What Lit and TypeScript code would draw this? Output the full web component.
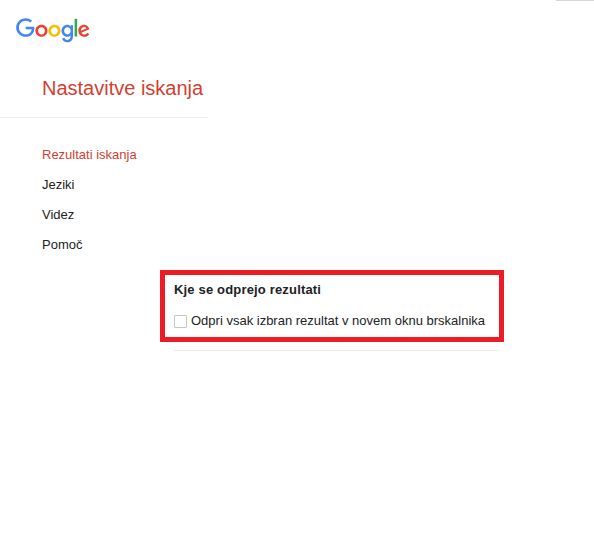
import { LitElement, html, css } from "lit";
import { customElement } from "lit/decorators.js";

@customElement("app-root")
export class AppRoot extends LitElement {
  static styles = css`
    :host { display: block; position: relative; width: 594px; height: 558px; background: #fff; overflow: hidden;
      font-family: "Liberation Sans", Arial, sans-serif; color: #222; }
    .topline { position: absolute; top: 0; right: 0; width: 38px; height: 1px; background: #d6d6d6; }
    .logo { display: block; width: 74px; height: 25px; margin: 18px 0 0 16px; }
    .title-row { width: 208px; height: 57px; margin-top: 17px; border-bottom: 1px solid #ebebeb; box-sizing: content-box; }
    h1 { margin: 0; padding-left: 42px; font-size: 20px; font-weight: 400; line-height: 57px; height: 57px; color: #d23f2f; white-space: nowrap; }
    nav { display: flex; flex-direction: column; gap: 14px; padding: 29px 0 0 42px; }
    nav a { font-size: 13px; line-height: 16px; color: #222; }
    nav a.active { color: #d23f2f; }
    .box { box-sizing: border-box; width: 344px; height: 72px; margin: 17px 0 0 160px; border: 5px solid #ed1c24; padding: 7px 9px; }
    h2 { margin: 0; font-size: 13px; font-weight: 700; line-height: 16px; letter-spacing: 0.17px; color: #222; white-space: nowrap; }
    .opt { display: flex; align-items: center; gap: 4px; margin-top: 15px; font-size: 13px; line-height: 16px; color: #222; white-space: nowrap; }
    .cb { box-sizing: border-box; width: 13px; height: 13px; border: 1px solid #c6c6c6; border-radius: 1px; background: #fff; }
    .rule { width: 324px; height: 1px; margin: 8px 0 0 174px; background: #ebebeb; }
  `;

  render() {
    return html`
      <div class="topline"></div>
      <svg class="logo" viewBox="0 0 272 92" aria-label="Google">
        <path fill="#EA4335" d="M115.75 47.18c0 12.77-9.99 22.18-22.25 22.18s-22.25-9.41-22.25-22.18C71.25 34.32 81.24 25 93.5 25s22.25 9.32 22.25 22.18zm-9.74 0c0-7.98-5.79-13.44-12.51-13.44S80.99 39.2 80.99 47.18c0 7.9 5.79 13.44 12.51 13.44s12.51-5.55 12.51-13.44z"/>
        <path fill="#FBBC05" d="M163.75 47.18c0 12.77-9.99 22.18-22.25 22.18s-22.25-9.41-22.25-22.18c0-12.85 9.99-22.18 22.25-22.18s22.25 9.32 22.25 22.18zm-9.74 0c0-7.98-5.79-13.44-12.51-13.44s-12.51 5.46-12.51 13.44c0 7.9 5.79 13.44 12.51 13.44s12.51-5.55 12.51-13.44z"/>
        <path fill="#4285F4" d="M209.75 26.34v39.82c0 16.38-9.66 23.07-21.08 23.07-10.75 0-17.22-7.19-19.66-13.07l8.48-3.53c1.51 3.61 5.21 7.87 11.17 7.87 7.31 0 11.84-4.51 11.84-13v-3.19h-.34c-2.18 2.69-6.38 5.04-11.68 5.04-11.09 0-21.25-9.66-21.25-22.09 0-12.52 10.16-22.26 21.25-22.26 5.29 0 9.49 2.35 11.68 4.96h.34v-3.61h9.25zm-8.56 20.92c0-7.81-5.21-13.52-11.84-13.52-6.72 0-12.35 5.71-12.35 13.52 0 7.73 5.63 13.36 12.35 13.36 6.63 0 11.84-5.63 11.84-13.36z"/>
        <path fill="#34A853" d="M225 3v65h-9.5V3h9.5z"/>
        <path fill="#EA4335" d="M262.02 54.48l7.56 5.04c-2.44 3.61-8.32 9.83-18.48 9.83-12.6 0-22.01-9.74-22.01-22.18 0-13.19 9.49-22.18 20.92-22.18 11.51 0 17.14 9.16 18.98 14.11l1.01 2.52-29.65 12.28c2.27 4.45 5.8 6.72 10.75 6.72 4.96 0 8.4-2.44 10.92-6.14zm-23.27-7.98l19.82-8.23c-1.09-2.77-4.37-4.7-8.23-4.7-4.95 0-11.84 4.37-11.59 12.93z"/>
        <path fill="#4285F4" d="M35.29 41.41V32H67c.31 1.64.47 3.58.47 5.68 0 7.06-1.93 15.79-8.15 22.01-6.05 6.3-13.78 9.66-24.02 9.66C16.32 69.35.36 53.89.36 34.91.36 15.93 16.32.47 35.3.47c10.5 0 17.98 4.12 23.6 9.49l-6.64 6.64c-4.03-3.78-9.49-6.72-16.97-6.72-13.86 0-24.7 11.17-24.7 25.03 0 13.86 10.84 25.03 24.7 25.03 8.99 0 14.11-3.61 17.39-6.89 2.66-2.66 4.41-6.46 5.1-11.65l-22.49.01z"/>
      </svg>
      <div class="title-row"><h1>Nastavitve iskanja</h1></div>
      <nav>
        <a class="active">Rezultati iskanja</a>
        <a>Jeziki</a>
        <a>Videz</a>
        <a>Pomoč</a>
      </nav>
      <section class="box">
        <h2>Kje se odprejo rezultati</h2>
        <label class="opt"><span class="cb"></span>Odpri vsak izbran rezultat v novem oknu brskalnika</label>
      </section>
      <div class="rule"></div>
    `;
  }
}
